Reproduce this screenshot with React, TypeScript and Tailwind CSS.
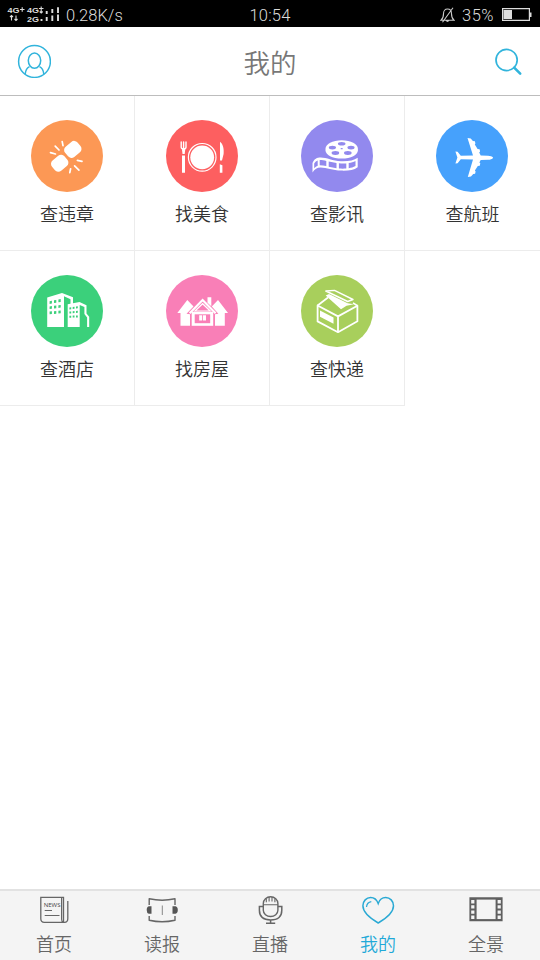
import type { ReactNode } from 'react';
import clsx from 'clsx';

/* ---------- service icons, all on a 72x72 canvas ---------- */

function ViolationIcon() {
  return (
    <>
      <g fill="#fff">
        <rect x="33.700" y="22.700" width="16.200" height="13.400" rx="4.400" transform="rotate(-40 41.8 29.4)" />
        <rect x="20.600" y="36.600" width="16.200" height="13.400" rx="4.400" transform="rotate(-40 28.7 43.3)" />
      </g>
      <path
        d="M19.500 32.600 24.500 34M24.200 26.200 28 30M31.200 21.700 32 25.700M39.600 48.800 38.800 52.600M43.600 45.800 47.900 50.200M46.400 40.400 51 41.400"
        stroke="#fff"
        strokeWidth="1.700"
        strokeLinecap="round"
      />
    </>
  );
}

function FoodIcon() {
  return (
    <>
      <circle cx="36.200" cy="37.300" r="13.800" stroke="#fff" strokeWidth="1.200" />
      <circle cx="36.200" cy="37.300" r="11.900" fill="#fff" />
      <path d="M15.200 22v5.200c0 2.300 4.800 2.300 4.800 0V22M17.600 22v9" stroke="#fff" strokeWidth="1.400" strokeLinecap="round" />
      <path d="M15.800 28.200h3.600L18.700 34h-2.200zM16 35.500h3v17.300h-3z" fill="#fff" />
      <path d="M54 21.700c3 2 4.200 7 3.600 12.400L56 40.400h-2zM53.800 44.300l2.600 1v7.500h-2.600z" fill="#fff" />
    </>
  );
}

function MovieIcon() {
  return (
    <>
      <path d="M24.500 28.700c0-4.800 7-8.500 16.200-8.500s16.200 3.700 16.200 8.500v1.600c0 4.700-7 8.300-16.200 8.300s-16.200-3.600-16.200-8.300z" fill="#fff" />
      <g fill="#9289ee">
        <ellipse cx="40.700" cy="23.800" rx="3.800" ry="1.800" />
        <ellipse cx="31.400" cy="27.600" rx="3.600" ry="1.900" />
        <ellipse cx="50" cy="27.600" rx="3.600" ry="1.900" />
        <ellipse cx="34.400" cy="33" rx="3.800" ry="1.900" />
        <ellipse cx="46.800" cy="33" rx="3.800" ry="1.900" />
        <ellipse cx="40.700" cy="28.700" rx="1.200" ry=".6" />
      </g>
      <path
        d="M11.500 43c2-4.300 4.300-5.500 8.200-5.500 6 0 12 3.400 20.300 3.700 7.500.200 13-.7 16.700-3.400v9.400c-4 3-9.300 3.600-16.700 3.400-8-.2-14.500-3.200-20.300-3.200-3.700 0-6 1.600-8.200 5z"
        fill="#fff"
      />
      <path
        d="M13.200 43.600c1-1.800 2.200-2.700 3.500-3.100v5.200c-1.400.5-2.500 1.300-3.500 2.500zM18.700 39.900c2.500 0 4.600.4 6.600 1v5.100c-2.200-.5-4.300-.8-6.600-.8zM27.700 41.500l7.800 1.500v5.200l-7.800-1.500zM37.900 43.300c2.500.2 5 .2 7.400.1v5.100c-2.500.2-4.900.2-7.400 0zM47.700 43.100c2.600-.3 4.700-1 6.800-2.100v5c-2.200 1.200-4.200 1.800-6.800 2.200z"
        fill="#9289ee"
      />
    </>
  );
}

function FlightIcon() {
  return (
    <path
      d="M57 37.500c-.8-1.200-2.700-1.700-5-1.800L44.700 35.400l-1.500-2.900.9-.9-.5-2.400-2-.3-2.800-4.400.6-.9-.5-2.300-2-.4-2.200-2.400-3.200-.5 5.500 17.400-12.200.4-3.200-4-2.200-.4 2 6.100-2 6.100 2.200-.4 3.200-4 12.200.4-5.200 17.400 3.200-.4 2.200-2.500 1.900-.4.500-2.300-.7-.9 2.900-4.400 2-.3.5-2.500-.9-.9 1.300-2.300 7.300-.3c2.300-.1 4.200-.6 5-1.800z"
      fill="#fff"
    />
  );
}

function HotelIcon() {
  return (
    <>
      <path d="M16.200 22.500 31 18l11 4.300v7.200l-2.500.4v-5.600l-6.500-3V52H16.200z" fill="#fff" />
      <path d="M36.700 29.300 48.500 27l7 3.200v8.200l2.700 3.400V52h-2.100v-9.500l-2.700-3.400v-7l-4.700-2.200V52h-12z" fill="#fff" />
      <g fill="#3bd07b">
        <path d="M18.600 26.200l2.300-.4v2.700l-2.300.4zM23 25.300l2.300-.4v2.800l-2.300.4zM27.400 24.500l2.300-.4v2.800l-2.300.4z" />
        <path d="M18.600 31.400l2.300-.3v2.700l-2.300.3zM23 30.800l2.300-.3v2.700l-2.300.3zM27.400 30.200l2.300-.3v2.700l-2.300.3z" />
        <path d="M18.600 36.500l2.300-.2V39l-2.300.2zM23 36.200l2.300-.2v2.700l-2.300.2zM27.400 35.800l2.300-.2v2.700l-2.300.2z" />
        <path d="M38.400 32.500l1.800-.3v2l-1.800.3zM41.700 32l1.800-.3v2l-1.800.3zM45 31.500l1.800-.3v2l-1.800.3z" />
        <path d="M38.400 36.600l1.800-.2v2l-1.800.2zM41.700 36.300l1.800-.2v2l-1.800.2zM45 36l1.800-.2v2l-1.800.2z" />
        <path d="M38.400 40.800h1.800v2h-1.800zM41.700 40.600h1.800v2h-1.800zM45 40.400h1.800v2H45z" />
      </g>
    </>
  );
}

function HouseIcon() {
  return (
    <>
      <path d="M11.300 38 21.300 25l6.200 6.400-7 7.400 3.500.5v11.500h-9.500V38zM62 38 52 25l-6.200 6.400 6.600 7.400-3.400.5v11.500h9.800V38z" fill="#fff" />
      <path d="M41.500 22.300h3.800v9l-3.800-3.600z" fill="#fff" />
      <path d="M23.700 38.200 36.600 25l13 13.200" stroke="#fff" strokeWidth="2.200" />
      <path d="M29 36 36.600 28.700 44.200 36z" stroke="#fff" strokeWidth="1.200" />
      <path d="M25.700 36.800h21.500v14H25.700z" fill="#fff" />
      <path d="M28.700 39.300h15.500v8.900H28.700z" fill="#f97fb7" />
      <path d="M33.200 40.300h3v5.200h-3zM37 40.300h3v5.200h-3z" fill="#fff" />
    </>
  );
}

function ParcelIcon() {
  return (
    <>
      <path d="M16.600 30.500 37 41.400l19.400-10.700v15.600L37 57.200 16.600 46.400zM37 41.400v15.800" stroke="#fff" strokeWidth="1.800" strokeLinejoin="round" />
      <path d="M16.600 30.500 27 22.500M52 27.900l4.400 2.800" stroke="#fff" strokeWidth="1.700" />
      <path d="M24.800 16l8.700-.6L52 24.500l-5.300 2z" stroke="#fff" strokeWidth="1.400" strokeLinejoin="round" />
      <path d="M24.700 20.500 28 19 46.600 28.200 53 29.200 45.500 30.700l-5.500 3.500z" fill="#fff" />
      <path d="M19 35.500 32.500 42.600v6.200L19 41.700z" fill="#fff" />
    </>
  );
}

/* ---------- tab bar icons, 36x30 ---------- */

function NewsIcon() {
  return (
    <>
      <path d="M4.800 2.300h22.700v25H8.300q-3.500 0-3.500-3.500zM27.500 27.300h1q3.300 0 3.300-3.500V6" stroke="#666" strokeWidth="1.300" />
      <path d="M27.300 27.300q-1.700-.6-1.700-3V2.300M8.700 15.500H16M8.700 20.500h14.800" stroke="#666" strokeWidth="1.200" />
      <text x="7.700" y="11.700" fontSize="6" fontFamily="Open Sans, sans-serif" fill="#444" textLength="16.800" lengthAdjust="spacingAndGlyphs">NEWS</text>
    </>
  );
}

function ReaderIcon() {
  return (
    <>
      <path d="M5.200 10V3.800q12.900 2.800 25.800 0V10M5.200 21v4.200q12.900 3 25.800 0V21" stroke="#666" strokeWidth="1.400" strokeLinejoin="round" />
      <path d="M18.300 10.500v9.500" stroke="#888" strokeWidth="1" />
      <path d="M7.500 11.300v7.400H4.800q-2.100-.5-2.100-3.700t2.100-3.700zM28.500 11.300v7.400h3q2.300-.5 2.300-3.700t-2.300-3.700z" fill="#555" />
    </>
  );
}

function MicIcon() {
  return (
    <>
      <path d="M11.300 8.500a7.300 6.800 0 0 1 14.600 0v6.800a7.300 6.200 0 0 1-14.600 0z" stroke="#666" strokeWidth="1.400" />
      <path d="M11.300 9.800h14.600M14.300 3.800v3.500M17.100 2v4.500M20 2v4.500M22.900 3.800v3.500" stroke="#666" strokeWidth="1.100" />
      <path d="M11.300 11.500H7.400v3.800q0 9.600 11.200 9.600t11.200-9.600v-3.800h-3.900M18.600 25v3.100M14 28.200h9.200" stroke="#666" strokeWidth="1.500" />
    </>
  );
}

function HeartIcon() {
  return (
    <>
      <path d="M18.200 28C10.500 23.500 2.900 17.700 2.900 10.800c0-4.700 3.500-8.300 7.700-8.300 3.500 0 6.200 2.200 7.600 6 1.300-3.800 4.100-6 7.500-6 4.300 0 7.800 3.600 7.800 8.300C33.500 17.700 26 23.500 18.200 28z" stroke="#2aa9d4" strokeWidth="1.500" />
      <path d="M6.500 12c.3-3 2-5 4.800-5.400" stroke="#2aa9d4" strokeWidth="1.200" />
    </>
  );
}

function PanoramaIcon() {
  return (
    <>
      <path d="M1.400 2.200h33.200v24H1.400z" fill="#5f5f5f" />
      <path d="M8.600 4.600h19v19.500h-19z" fill="#f4f4f4" />
      <path
        d="M3.200 5h3.200v3.400H3.200zM3.200 10.200h3.200v3.400H3.200zM3.200 15.400h3.200v3.400H3.200zM3.200 20.600h3.200V24H3.200zM29.600 5h3.200v3.400h-3.200zM29.600 10.200h3.200v3.400h-3.200zM29.600 15.400h3.200v3.400h-3.200zM29.600 20.600h3.200V24h-3.200z"
        fill="#f4f4f4"
      />
    </>
  );
}

interface Service {
  label: string;
  color: string;
  icon: ReactNode;
}

const services: Service[] = [
  { label: '查违章', color: 'bg-[#fc9855]', icon: <ViolationIcon /> },
  { label: '找美食', color: 'bg-[#fd5f60]', icon: <FoodIcon /> },
  { label: '查影讯', color: 'bg-[#9289ee]', icon: <MovieIcon /> },
  { label: '查航班', color: 'bg-[#46a1fc]', icon: <FlightIcon /> },
  { label: '查酒店', color: 'bg-[#3bd07b]', icon: <HotelIcon /> },
  { label: '找房屋', color: 'bg-[#f97fb7]', icon: <HouseIcon /> },
  { label: '查快递', color: 'bg-[#a8cf5c]', icon: <ParcelIcon /> },
];

const tabs = [
  { label: '首页', icon: <NewsIcon /> },
  { label: '读报', icon: <ReaderIcon /> },
  { label: '直播', icon: <MicIcon /> },
  { label: '我的', icon: <HeartIcon />, active: true },
  { label: '全景', icon: <PanoramaIcon /> },
];

function StatusBar() {
  return (
    <div className="grid h-[27px] shrink-0 grid-cols-3 items-center bg-black pt-0.5 font-['Roboto',sans-serif] text-[16.5px] font-light text-[#dcdcdc]">
      <div className="flex items-center">
        <svg className="h-[18px] w-[66px] shrink-0" viewBox="0 0 66 18" fill="none">
          <g fill="#ddd" fontFamily="Liberation Sans, sans-serif" fontSize="7.500" fontWeight="700">
            <text x="7.500" y="7.300" textLength="12" lengthAdjust="spacingAndGlyphs">4G</text>
            <text x="27" y="7.300" textLength="12" lengthAdjust="spacingAndGlyphs">4G</text>
            <text x="27" y="16" textLength="12" lengthAdjust="spacingAndGlyphs">2G</text>
          </g>
          <path d="M20 3.500h4.500M22.200 1.300v4.500M39 2.500h4.500M41.200.5v6.500M39.700 5.500l1.500 1.500 1.500-1.500M11.500 9.500v5M10 11l1.500-1.500L13 11M16 9.500v5M14.500 13 16 14.500l1.500-1.500" stroke="#ddd" strokeWidth="1.100" />
          <path d="M41.500 13v2M46.700 11v4M52.300 9.500V15M58 8.500V15M46.700 5v3M52.300 3v4M58 1.200v5.800" stroke="#ddd" strokeWidth="1.900" />
        </svg>
        <span className="pt-0.5">0.28K/s</span>
      </div>
      <div className="pt-0.5 text-center tracking-[0.2px]">10:54</div>
      <div className="flex items-center justify-end pr-2">
        <svg className="mr-[7px] h-4 w-[15px]" viewBox="0 0 15 16" fill="none" stroke="#ccc" strokeWidth="1.100">
          <path d="M1 13.200h13c-2-1.700-2.500-3.500-2.500-6.500 0-2.900-1.500-4.700-4-4.700s-4 1.800-4 4.700c0 3-.5 4.800-2.500 6.500zM6 13.200q1.500 2.300 3 0M13 .8 2.500 15.200" />
        </svg>
        <span className="pt-0.5 tracking-[0.5px]">35%</span>
        <svg className="ml-2 h-[14px] w-[30px]" viewBox="0 0 30 14" fill="none">
          <path d="M.6.600h26.800v11.800H.6z" stroke="#ddd" strokeWidth="1.200" />
          <path d="M1.500 2h8.500v9H1.500z" fill="#ddd" />
          <path d="M28 4.500h1.500v4.500H28z" fill="#ddd" />
        </svg>
      </div>
    </div>
  );
}

function Header() {
  return (
    <header className="flex h-[69px] shrink-0 items-center justify-between border-b border-[#bdbdbd] bg-white px-[17px]">
      <svg className="h-[34px] w-[34px]" viewBox="0 0 34 34" fill="none" stroke="#31b4dc" strokeWidth="1.500">
        <circle cx="17.500" cy="17.500" r="15.900" />
        <ellipse cx="17.500" cy="16.600" rx="6.200" ry="7.600" />
        <path d="M8.200 30.300c.3-3.500 1.700-6.300 4.300-7.600M26.800 30.300c-.3-3.500-1.700-6.300-4.300-7.600" />
      </svg>
      <h1 className="pt-0.5 text-[26.5px] font-[350] text-[#777]">我的</h1>
      <svg className="h-[34px] w-[34px]" viewBox="0 0 34 34" fill="none" stroke="#31b4dc">
        <circle cx="17.600" cy="16" r="10.600" strokeWidth="1.700" />
        <path d="M25.200 23.600l6 6" strokeWidth="2.600" strokeLinecap="round" />
      </svg>
    </header>
  );
}

export default function App() {
  return (
    <div className="flex h-[960px] w-[540px] flex-col overflow-hidden bg-white font-['Noto_Sans_CJK_SC',sans-serif]">
      <StatusBar />
      <Header />

      <main className="flex-1">
        <div className="grid grid-cols-4">
          {services.map((item, i) => (
            <div
              key={item.label}
              className={clsx(
                'flex h-[155px] flex-col items-center border-b border-[#ececec] pt-6',
                i !== 3 && 'border-r',
              )}
            >
              <div className={clsx('size-[72px] rounded-full', item.color, i === 3 && 'mr-px')}>
                <svg className="size-full" viewBox="0 0 72 72" fill="none">
                  {item.icon}
                </svg>
              </div>
              <span className="mt-2 text-lg leading-[27px] font-[350] text-[#333]">{item.label}</span>
            </div>
          ))}
        </div>
      </main>

      <nav className="grid h-[71px] shrink-0 grid-cols-5 border-t-2 border-[#e2e2e2] bg-[#f4f4f4]">
        {tabs.map((tab) => (
          <div key={tab.label} className="flex flex-col items-center pt-1">
            <svg className="h-[30px] w-9" viewBox="0 0 36 30" fill="none">
              {tab.icon}
            </svg>
            <span className={clsx('mt-1.5 text-lg leading-6 font-[350]', tab.active ? 'text-[#1fa9d8]' : 'text-[#666]')}>
              {tab.label}
            </span>
          </div>
        ))}
      </nav>
    </div>
  );
}
